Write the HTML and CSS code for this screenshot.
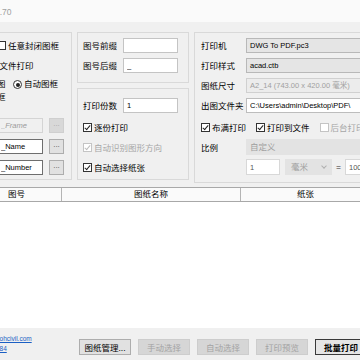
FILE: index.html
```html
<!DOCTYPE html>
<html lang="zh-CN">
<head>
  <meta charset="UTF-8" />
  <title>批量打印</title>
  <link rel="stylesheet" href="styles.css">
</head>
<body>
  <!-- 标题栏 -->
  <div class="titlebar"><span class="title">批量打印 V1.70</span></div>

  <!-- 设置区域 -->
  <div class="settings">
    <div class="group frame-group">
      <div class="row"><span class="check cut"></span><span>任意封闭图框</span></div>
      <div class="row"><span class="cut-text">多文件打印</span></div>
      <div class="radio-row">
        <span class="wrap-label">图<br>框</span>
        <span class="radio on"></span><span>自动图框</span>
      </div>
      <div class="row tall"><input class="box frame disabled" value="_Frame" readonly><span class="dots disabled">...</span></div>
      <div class="row tall"><input class="box frame dark" value="_Name" readonly><span class="dots">...</span></div>
      <div class="row tall"><input class="box frame dark" value="_Number" readonly><span class="dots">...</span></div>
    </div>

    <div class="middle">
      <div class="group prefix-group">
        <div class="row"><span class="label">图号前缀</span><input class="box mid" value="" readonly></div>
        <div class="row"><span class="label">图号后缀</span><input class="box mid" value="_" readonly></div>
      </div>
      <div class="group copies-group">
        <div class="row first"><span class="label">打印份数</span><input class="box mid" value="1" readonly></div>
        <div class="row"><span class="check on"></span><span>逐份打印</span></div>
        <div class="row off"><span class="check on off"></span><span>自动识别图形方向</span></div>
        <div class="row"><span class="check on"></span><span>自动选择纸张</span></div>
      </div>
    </div>

    <div class="group printer-group">
      <div class="row"><span class="label wide">打印机</span><div class="combo">DWG To PDF.pc3</div></div>
      <div class="row"><span class="label wide">打印样式</span><div class="combo">acad.ctb</div></div>
      <div class="row"><span class="label wide">图纸尺寸</span><div class="combo disabled">A2_14 (743.00 x 420.00 毫米)</div></div>
      <div class="row"><span class="label wide">出图文件夹</span><input class="box path" value="C:\Users\admin\Desktop\PDF\" readonly></div>
      <div class="row first-check">
        <span class="check on"></span><span class="opt">布满打印</span>
        <span class="check on"></span><span class="opt">打印到文件</span>
        <span class="check off"></span><span class="opt off">后台打印</span>
      </div>
      <div class="row"><span class="label wide">比例</span><div class="combo flat">自定义</div></div>
      <div class="row">
        <span class="label wide"></span>
        <input class="box scale" value="1" readonly>
        <div class="combo flat unit">毫米<span class="arrow"></span></div>
        <span class="equals">=</span>
        <input class="box scale" value="100" readonly>
      </div>
    </div>
  </div>

  <!-- 图纸列表 -->
  <div class="table">
    <div class="thead">
      <div class="col c1">图号</div>
      <div class="col c2">图纸名称</div>
      <div class="col c3">纸张</div>
    </div>
    <div class="tbody"></div>
  </div>

  <!-- 底部按钮 -->
  <div class="footer">
    <div class="links">
      <a class="l1" href="#">www.ohcivil.com</a>
      <a class="l2" href="#">QQ:584</a>
    </div>
    <button class="btn">图纸管理...</button>
    <button class="btn" disabled>手动选择</button>
    <button class="btn" disabled>自动选择</button>
    <button class="btn" disabled>打印预览</button>
    <button class="btn default">批量打印</button>
  </div>
</body>
</html>
```

FILE: styles.css
```css
/* 基础 */
* {
  box-sizing: border-box;
  margin: 0;
  padding: 0;
}

body {
  width: 360px;
  height: 360px;
  overflow: hidden;
  background: #f0f0f0;
  font-family: "Liberation Sans", "Noto Sans CJK SC", sans-serif;
  font-size: 8.5px;
  color: #000;
}

.titlebar {
  height: 22px;
  background: #fafafa;
  display: flex;
  align-items: center;
  white-space: nowrap;
}

.title {
  margin-left: -47px;
  color: #a0a0a0;
}

/* 分组框 */
.settings {
  display: flex;
  gap: 5px;
  margin-left: -64px;
  padding-top: 10px;
  height: 165px;
}

.group {
  border: 1px solid #d9d9d9;
  flex-shrink: 0;
}

.row {
  display: flex;
  align-items: center;
  height: 20px;
  white-space: nowrap;
}

.frame-group {
  width: 136px;
  height: 148px;
  padding: 2px 0 0 63px;
}

.cut {
  margin-left: -3px;
}

.cut-text {
  margin-left: -9px;
}

.radio-row {
  display: flex;
  align-items: flex-start;
  height: 40px;
  padding-top: 3px;
  line-height: 13px;
}

.wrap-label {
  display: inline-block;
  width: 9px;
  margin-left: -3px;
  margin-right: 7px;
}

.radio {
  width: 9px;
  height: 9px;
  margin-top: 2px;
  margin-right: 2px;
  border: 1px solid #333;
  border-radius: 50%;
  background: #fff;
  position: relative;
}

.radio.on::after {
  content: "";
  position: absolute;
  left: 1.5px;
  top: 1.5px;
  width: 4px;
  height: 4px;
  border-radius: 50%;
  background: #222;
}

.row.tall {
  height: 21px;
}

/* 输入框 */
.box {
  height: 15px;
  border: 1px solid #c4c4c4;
  background: #fff;
  font: inherit;
  font-size: 7.5px;
  color: #000;
  padding: 0 3px;
  outline: none;
}

.box.frame {
  width: 46px;
  margin-left: -3px;
  padding-left: 3px;
}

.box.disabled {
  background: #f0f0f0;
  border-color: #d4d4d4;
  color: #9a9a9a;
  font-style: italic;
}

.box.dark {
  border-color: #6e6e6e;
}

.dots {
  width: 15px;
  height: 15px;
  margin-left: 6px;
  border: 1px solid #adadad;
  background: #e1e1e1;
  color: #555;
  font-size: 8px;
  line-height: 10px;
  text-align: center;
}

.dots.disabled {
  background: #d8d8d8;
  border-color: #cfcfcf;
  color: #aaa;
}

/* 中间列 */
.middle {
  display: flex;
  flex-direction: column;
  gap: 5px;
  width: 112px;
  flex-shrink: 0;
}

.prefix-group {
  height: 51px;
  padding: 2px 0 0 5px;
}

.copies-group {
  height: 92px;
  padding: 6px 0 0 5px;
}

.copies-group .row.first {
  margin-bottom: 2px;
}

.label {
  width: 40px;
  flex-shrink: 0;
}

.label.wide {
  width: 45px;
}

.box.mid {
  width: 55px;
}

.check {
  width: 9px;
  height: 9px;
  margin-right: 2px;
  border: 1px solid #333;
  background: #fff;
  flex-shrink: 0;
  position: relative;
}

.check.on::after {
  content: "";
  position: absolute;
  left: 2px;
  top: 0;
  width: 2px;
  height: 5px;
  border: solid #222;
  border-width: 0 1px 1px 0;
  transform: rotate(40deg);
}

.check.off {
  border-color: #c4c4c4;
}

.check.on.off::after {
  border-color: #bdbdbd;
}

.row.off {
  color: #a6a6a6;
}

/* 打印机设置 */
.printer-group {
  width: 200px;
  height: 151px;
  padding: 2px 0 0 6px;
}

.combo {
  width: 150px;
  height: 15px;
  line-height: 13px;
  padding: 0 3px;
  border: 1px solid #b8b8b8;
  background: #e5e5e5;
  font-size: 7.5px;
  white-space: nowrap;
  overflow: hidden;
}

.combo.disabled {
  color: #a0a0a0;
  background: #ececec;
  border-color: #d0d0d0;
}

.combo.flat {
  height: 16px;
  line-height: 14px;
  font-size: 8.5px;
  color: #9e9e9e;
  background: #e3e3e3;
  border-color: #e3e3e3;
}

.box.path {
  width: 150px;
  border-color: #bdbdbd;
}

.row.first-check {
  margin-top: 2px;
}

.opt {
  margin-right: 10px;
}

.opt.off {
  color: #a6a6a6;
}

.box.scale {
  width: 34px;
  height: 16px;
  border-color: #d8d8d8;
  color: #555;
}

.combo.unit {
  width: 47px;
  margin-left: 5px;
  padding-left: 5px;
  position: relative;
}

.arrow {
  position: absolute;
  right: 5px;
  top: 4px;
  width: 4px;
  height: 4px;
  border: solid #b0b0b0;
  border-width: 0 1px 1px 0;
  transform: rotate(45deg);
}

.equals {
  width: 13px;
  text-align: center;
  color: #333;
}

/* 表格 */
.table {
  margin-left: -28px;
  height: 141px;
  background: #fff;
}

.thead {
  display: flex;
  height: 15px;
  background: #fafafa;
  border-top: 1px solid #a8a8a8;
  border-bottom: 1px solid #a8a8a8;
  white-space: nowrap;
}

.col {
  text-align: center;
  line-height: 13px;
  border-right: 1px solid #b4b4b4;
  flex-shrink: 0;
}

.c1 {
  width: 90px;
}

.c2 {
  width: 179px;
}

.c3 {
  width: 130px;
}

/* 底部 */
.footer {
  display: flex;
  align-items: flex-start;
  height: 32px;
  padding-top: 11px;
  white-space: nowrap;
}

.links {
  width: 79px;
  flex-shrink: 0;
  display: flex;
  flex-direction: column;
  margin-top: -5px;
  font-size: 6.5px;
  line-height: 10px;
}

.links a {
  color: #1a5fc4;
}

.l1 {
  margin-left: -16px;
}

.l2 {
  margin-left: -16px;
}

.btn {
  width: 52px;
  height: 16px;
  margin-right: 7px;
  flex-shrink: 0;
  border: 1px solid #adadad;
  background: #e1e1e1;
  font: inherit;
  color: #000;
}

.btn:disabled {
  background: #d6d6d6;
  border-color: #cdcdcd;
  color: #a3a3a3;
}

.btn.default {
  border-color: #3a3a3a;
  background: #e5e5e5;
  font-weight: bold;
}
```
